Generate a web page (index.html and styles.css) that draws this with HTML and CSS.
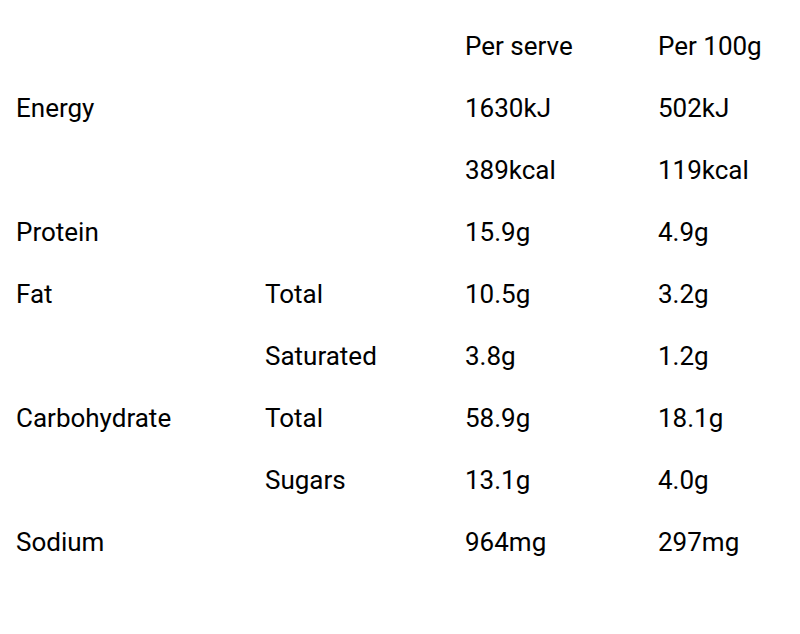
FILE: index.html
```html
<!DOCTYPE html>
<html lang="en">
<head>
<meta charset="utf-8">
<title>Nutrition information</title>
<link rel="stylesheet" href="styles.css">
</head>
<body>
<table class="nutrition">
  <colgroup>
    <col class="c-name">
    <col class="c-sub">
    <col class="c-serve">
    <col class="c-100">
  </colgroup>
  <thead>
    <tr><th></th><th></th><th>Per serve</th><th>Per 100g</th></tr>
  </thead>
  <tbody>
    <tr><td>Energy</td><td></td><td>1630kJ</td><td>502kJ</td></tr>
    <tr><td></td><td></td><td>389kcal</td><td>119kcal</td></tr>
    <tr><td>Protein</td><td></td><td>15.9g</td><td>4.9g</td></tr>
    <tr><td>Fat</td><td>Total</td><td>10.5g</td><td>3.2g</td></tr>
    <tr><td></td><td>Saturated</td><td>3.8g</td><td>1.2g</td></tr>
    <tr><td>Carbohydrate</td><td>Total</td><td>58.9g</td><td>18.1g</td></tr>
    <tr><td></td><td>Sugars</td><td>13.1g</td><td>4.0g</td></tr>
    <tr><td>Sodium</td><td></td><td>964mg</td><td>297mg</td></tr>
  </tbody>
</table>
</body>
</html>
```
FILE: styles.css
```css
html, body {
  margin: 0;
  padding: 0;
  background: #ffffff;
}
body {
  font-family: Roboto, "Liberation Sans", sans-serif;
  font-size: 26px;
  color: #000000;
  padding: 15px 0 0 16px;
}
.nutrition {
  border-collapse: collapse;
  table-layout: fixed;
  width: 760px;
}
.c-name { width: 249px; }
.c-sub { width: 200px; }
.c-serve { width: 193px; }
.c-100 { width: 118px; }
.nutrition th,
.nutrition td {
  padding: 16px 0;
  text-align: left;
  font-weight: 400;
  line-height: normal;
  white-space: nowrap;
  vertical-align: top;
}
```
